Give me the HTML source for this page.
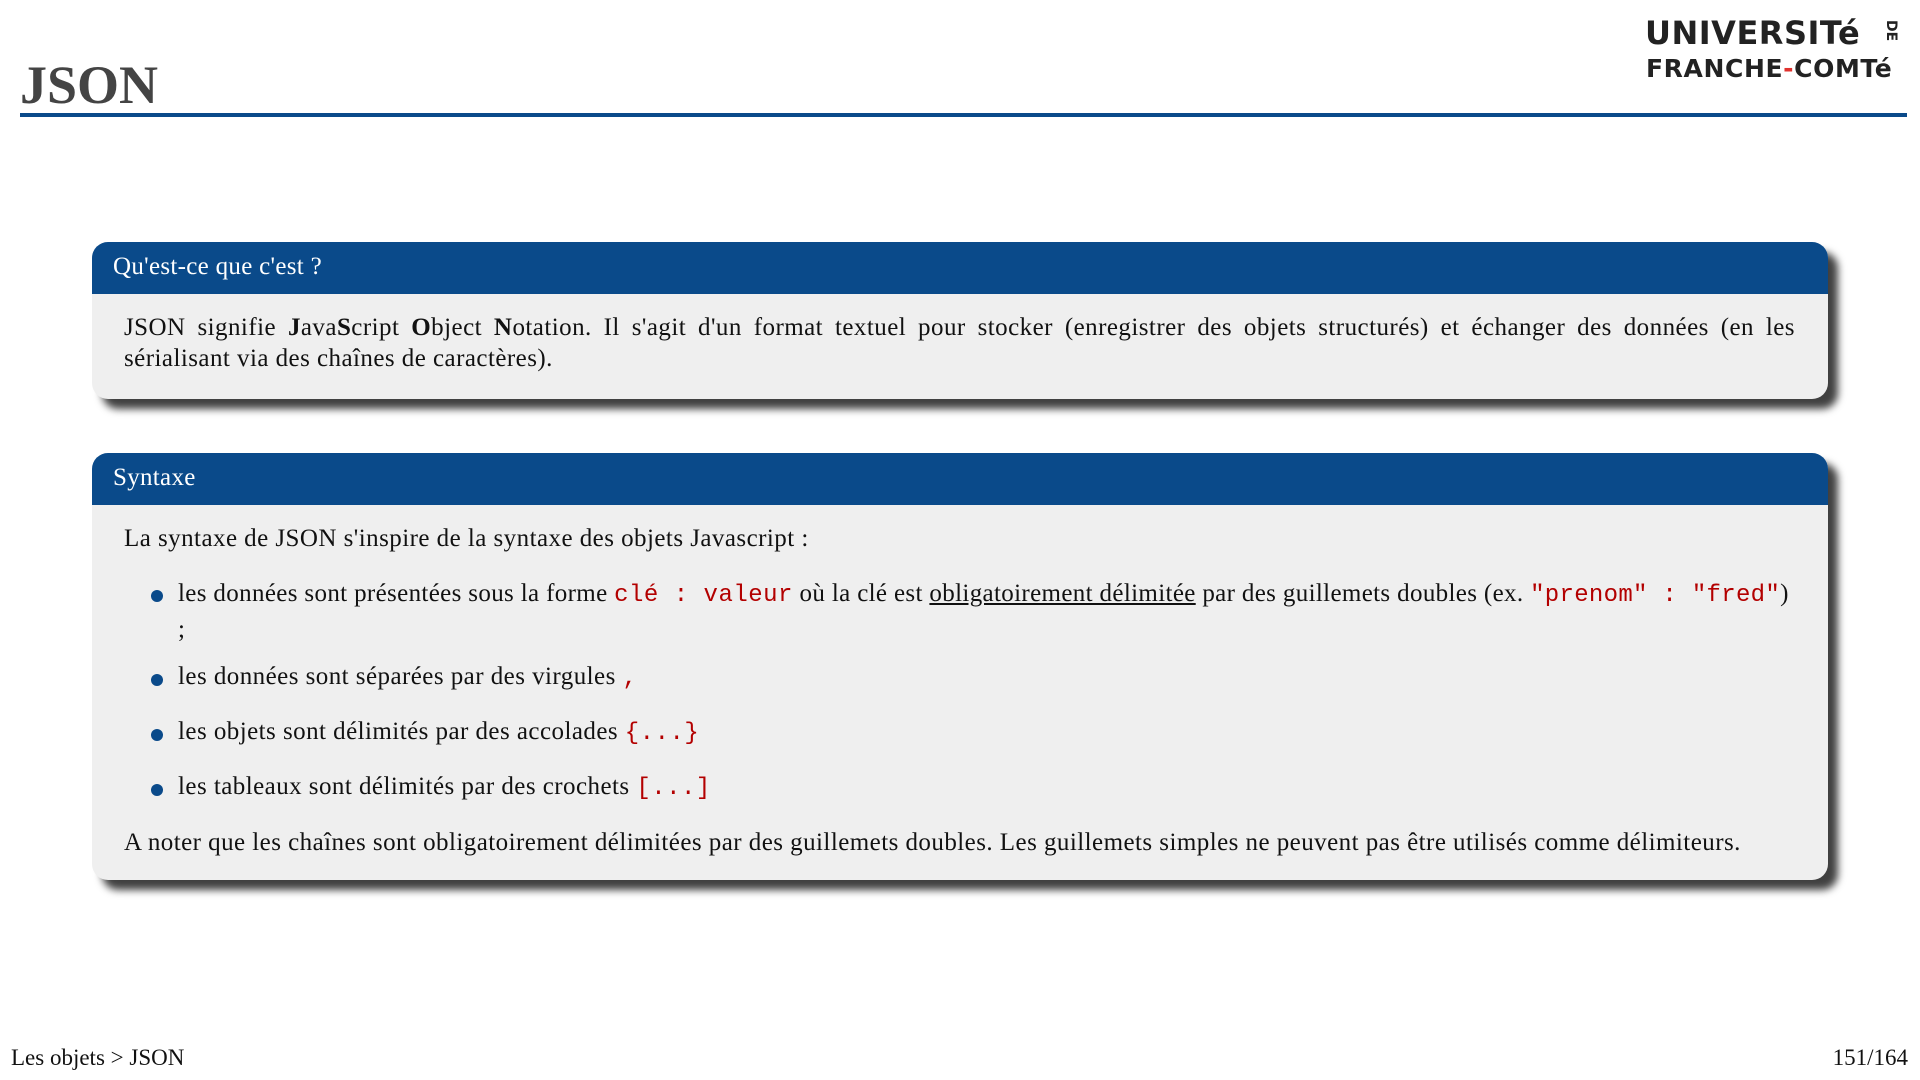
<!DOCTYPE html>
<html><head><meta charset="utf-8"><style>
body{margin:0;width:1920px;height:1080px;background:#fff;position:relative;overflow:hidden;font-family:"Liberation Serif",serif;color:#111}
.title{position:absolute;left:20px;top:58px;font-size:54px;font-weight:bold;color:#444;line-height:1}
.rule{position:absolute;left:20px;top:113px;width:1887px;height:4px;background:#0a4a8a}
.logo{position:absolute;font-family:"DejaVu Sans","Liberation Sans",sans-serif;font-weight:bold;color:#222;line-height:1;white-space:nowrap}
.box{position:absolute;left:92px;width:1736px;background:#efefef;border-radius:16px;box-shadow:10px 10px 8px rgba(0,0,0,0.75);overflow:hidden}
.hd{background:#0a4a8a;color:#fff;height:52px;font-size:25px;line-height:50px;padding-left:21px;letter-spacing:0.3px}
.bd{font-size:25px;padding:0 33px 0 32px;line-height:31px;letter-spacing:0.45px}
.c{font-family:"Liberation Mono",monospace;color:#b30000;font-size:24px;letter-spacing:0.5px}
ul{margin:0;padding:0;list-style:none}
li{position:relative;padding-left:54px}
li:before{content:"";position:absolute;left:27px;top:13px;width:12px;height:12px;border-radius:50%;background:#0a4a8a}
.foot{position:absolute;top:1045px;font-size:23px}
</style></head><body>
<div class="title">JSON</div>
<div class="rule"></div>
<div class="logo" style="left:1645px;top:17px;font-size:32px;letter-spacing:0.5px">UNIVERSITé</div>
<div class="logo" style="top:20px;font-size:14px;transform:rotate(90deg);transform-origin:left top;left:1898px">DE</div>
<div class="logo" style="left:1646px;top:56px;font-size:25px;letter-spacing:0.6px">FRANCHE<span style="color:#e0322e">-</span>COMTé</div>
<div class="box" style="top:242px;height:157px">
<div class="hd">Qu'est-ce que c'est ?</div>
<div class="bd" style="padding-top:18px;text-align:justify">JSON signifie <b>J</b>ava<b>S</b>cript <b>O</b>bject <b>N</b>otation. Il s'agit d'un format textuel pour stocker (enregistrer des objets structurés) et échanger des données (en les sérialisant via des chaînes de caractères).</div>
</div>
<div class="box" style="top:453px;height:427px">
<div class="hd">Syntaxe</div>
<div class="bd" style="padding-top:18px">
<div>La syntaxe de JSON s'inspire de la syntaxe des objets Javascript :</div>
<ul style="margin-top:23px">
<li style="line-height:34px;letter-spacing:0.35px">les données sont présentées sous la forme <span class="c">clé : valeur</span> où la clé est <u>obligatoirement délimitée</u> par des guillemets doubles (ex. <span class="c" style="letter-spacing:0.3px">"prenom" : "fred"</span>)<br>;</li>
<li style="margin-top:14px">les données sont séparées par des virgules <span class="c">,</span></li>
<li style="margin-top:22px">les objets sont délimités par des accolades <span class="c">{...}</span></li>
<li style="margin-top:22px">les tableaux sont délimités par des crochets <span class="c">[...]</span></li>
</ul>
<div style="margin-top:23px">A noter que les chaînes sont obligatoirement délimitées par des guillemets doubles. Les guillemets simples ne peuvent pas être utilisés comme délimiteurs.</div>
</div>
</div>
<div class="foot" style="left:11px">Les objets &gt; JSON</div>
<div class="foot" style="right:12px">151/164</div>
</body></html>
